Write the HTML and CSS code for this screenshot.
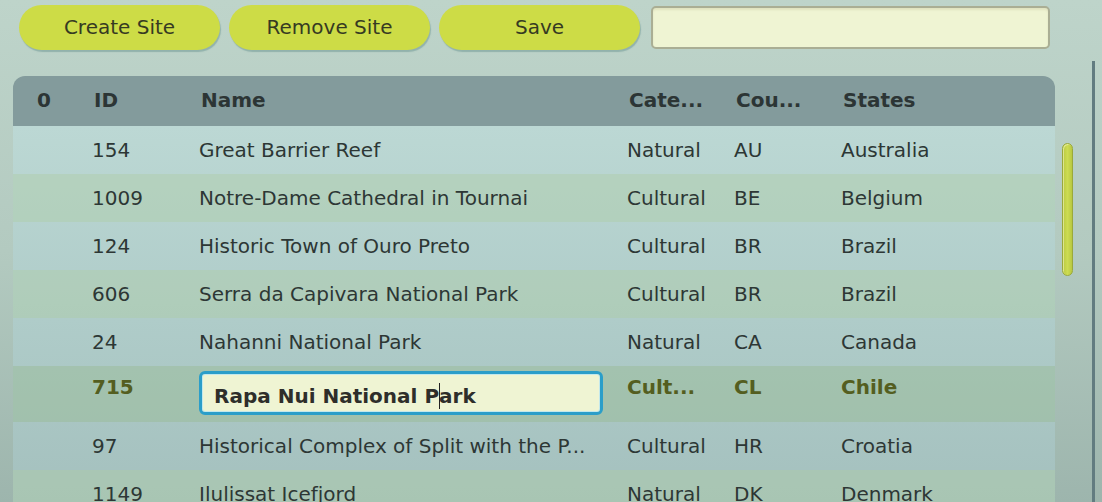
FILE: index.html
```html
<!DOCTYPE html>
<html>
<head>
<meta charset="utf-8">
<link rel="stylesheet" href="styles.css">
</head>
<body>
<div class="page">
  <div class="left">
    <div class="toolbar">
      <button class="btn">Create Site</button>
      <button class="btn">Remove Site</button>
      <button class="btn">Save</button>
      <div class="search"></div>
    </div>
    <div class="content">
      <div class="table">
        <div class="row head">
          <div class="cell">0</div>
          <div class="cell">ID</div>
          <div class="cell">Name</div>
          <div class="cell">Cate...</div>
          <div class="cell">Cou...</div>
          <div class="cell">States</div>
        </div>
        <div class="tbody">
          <div class="row">
            <div class="cell"></div><div class="cell">154</div><div class="cell">Great Barrier Reef</div><div class="cell">Natural</div><div class="cell">AU</div><div class="cell">Australia</div>
          </div>
          <div class="row even">
            <div class="cell"></div><div class="cell">1009</div><div class="cell">Notre-Dame Cathedral in Tournai</div><div class="cell">Cultural</div><div class="cell">BE</div><div class="cell">Belgium</div>
          </div>
          <div class="row">
            <div class="cell"></div><div class="cell">124</div><div class="cell">Historic Town of Ouro Preto</div><div class="cell">Cultural</div><div class="cell">BR</div><div class="cell">Brazil</div>
          </div>
          <div class="row even">
            <div class="cell"></div><div class="cell">606</div><div class="cell">Serra da Capivara National Park</div><div class="cell">Cultural</div><div class="cell">BR</div><div class="cell">Brazil</div>
          </div>
          <div class="row">
            <div class="cell"></div><div class="cell">24</div><div class="cell">Nahanni National Park</div><div class="cell">Natural</div><div class="cell">CA</div><div class="cell">Canada</div>
          </div>
          <div class="row selected">
            <div class="cell"></div><div class="cell">715</div>
            <div class="cell edit"><div class="editor">Rapa Nui National P<span class="caret"></span>ark</div></div>
            <div class="cell">Cult...</div><div class="cell">CL</div><div class="cell">Chile</div>
          </div>
          <div class="row">
            <div class="cell"></div><div class="cell">97</div><div class="cell">Historical Complex of Split with the P...</div><div class="cell">Cultural</div><div class="cell">HR</div><div class="cell">Croatia</div>
          </div>
          <div class="row even">
            <div class="cell"></div><div class="cell">1149</div><div class="cell">Ilulissat Icefjord</div><div class="cell">Natural</div><div class="cell">DK</div><div class="cell">Denmark</div>
          </div>
        </div>
      </div>
      <div class="scroll"><div class="thumb"></div></div>
    </div>
  </div>
  <div class="vline"></div>
</div>
</body>
</html>
```
FILE: styles.css
```css
html, body {
  margin: 0;
  padding: 0;
}
body {
  width: 1102px;
  height: 502px;
  overflow: hidden;
  background: linear-gradient(to bottom, #bed4ca 0%, #b3cac0 50%, #9db5ad 100%);
  font-family: "DejaVu Sans", sans-serif;
  font-size: 20px;
  color: #2d3735;
}
.page {
  display: flex;
  height: 502px;
}
.left {
  width: 1092px;
  display: flex;
  flex-direction: column;
}
.toolbar {
  display: flex;
  gap: 9px;
  padding: 5px 0 0 19px;
  height: 46px;
}
.btn {
  width: 201px;
  height: 45px;
  border: none;
  border-radius: 23px;
  background: #cddc46;
  color: #363a22;
  font-family: "DejaVu Sans", sans-serif;
  font-size: 20px;
  padding: 0 0 2px;
  box-shadow: 1px 2px 1px rgba(70, 120, 120, 0.35);
}
.search {
  width: 395px;
  height: 39px;
  margin-left: 2px;
  margin-top: 1px;
  background: #eff4d3;
  border: 2px solid #aaae94;
  border-radius: 5px;
  box-shadow: inset 0 2px 2px rgba(120, 110, 60, 0.12);
}
.content {
  display: flex;
  margin-top: 26px;
  flex: 1;
}
.table {
  margin-left: 13px;
  width: 1042px;
  display: flex;
  flex-direction: column;
}
.row {
  display: grid;
  grid-template-columns: 67px 107px 428px 107px 107px 1fr;
  height: 48px;
  align-items: center;
}
.cell {
  padding-left: 12px;
  white-space: nowrap;
  overflow: hidden;
}
.head {
  height: 50px;
  box-sizing: border-box;
  padding-bottom: 2px;
  background: #839b9c;
  border-radius: 12px 12px 0 0;
  font-weight: bold;
  color: #2c3535;
}
.head .cell {
  padding-left: 14px;
}
.head .cell:first-child {
  padding-left: 24px;
}
.tbody {
  flex: 1;
  background: linear-gradient(to bottom, #bcd8d4 0%, #b0cdca 45%, #a3bfbd 100%);
}
.row.even {
  background: rgba(175, 205, 165, 0.42);
}
.row.selected {
  height: 56px;
  align-items: start;
  padding-top: 5px;
  box-sizing: border-box;
  background: rgba(150, 185, 140, 0.4);
  font-weight: bold;
  color: #545e20;
}
.row.selected .cell {
  padding-top: 3px;
  line-height: 26px;
}
.row.selected .cell.edit {
  padding: 0 12px;
  overflow: visible;
}
.editor {
  height: 38px;
  border: 3px solid #2b9ec9;
  border-radius: 6px;
  background: #eff4d3;
  box-shadow: inset 0 0 0 1px #c3e8ec;
  color: #2e2e2a;
  padding-left: 12px;
  line-height: 44px;
}
.caret {
  display: inline-block;
  width: 1px;
  height: 26px;
  background: #222;
  vertical-align: -6px;
  margin: 0 -1px 0 0;
}
.scroll {
  width: 37px;
  padding: 67px 0 0 7px;
  box-sizing: border-box;
}
.thumb {
  width: 9px;
  height: 131px;
  border: 1.5px solid #9aa93a;
  border-radius: 6px;
  background: linear-gradient(to right, #b9c942, #cddc52 50%, #b8c840);
  box-shadow: inset 1px 1px 0 rgba(255, 255, 220, 0.5);
}
.vline {
  width: 3px;
  margin-top: 61px;
  background: #627c80;
}
```
